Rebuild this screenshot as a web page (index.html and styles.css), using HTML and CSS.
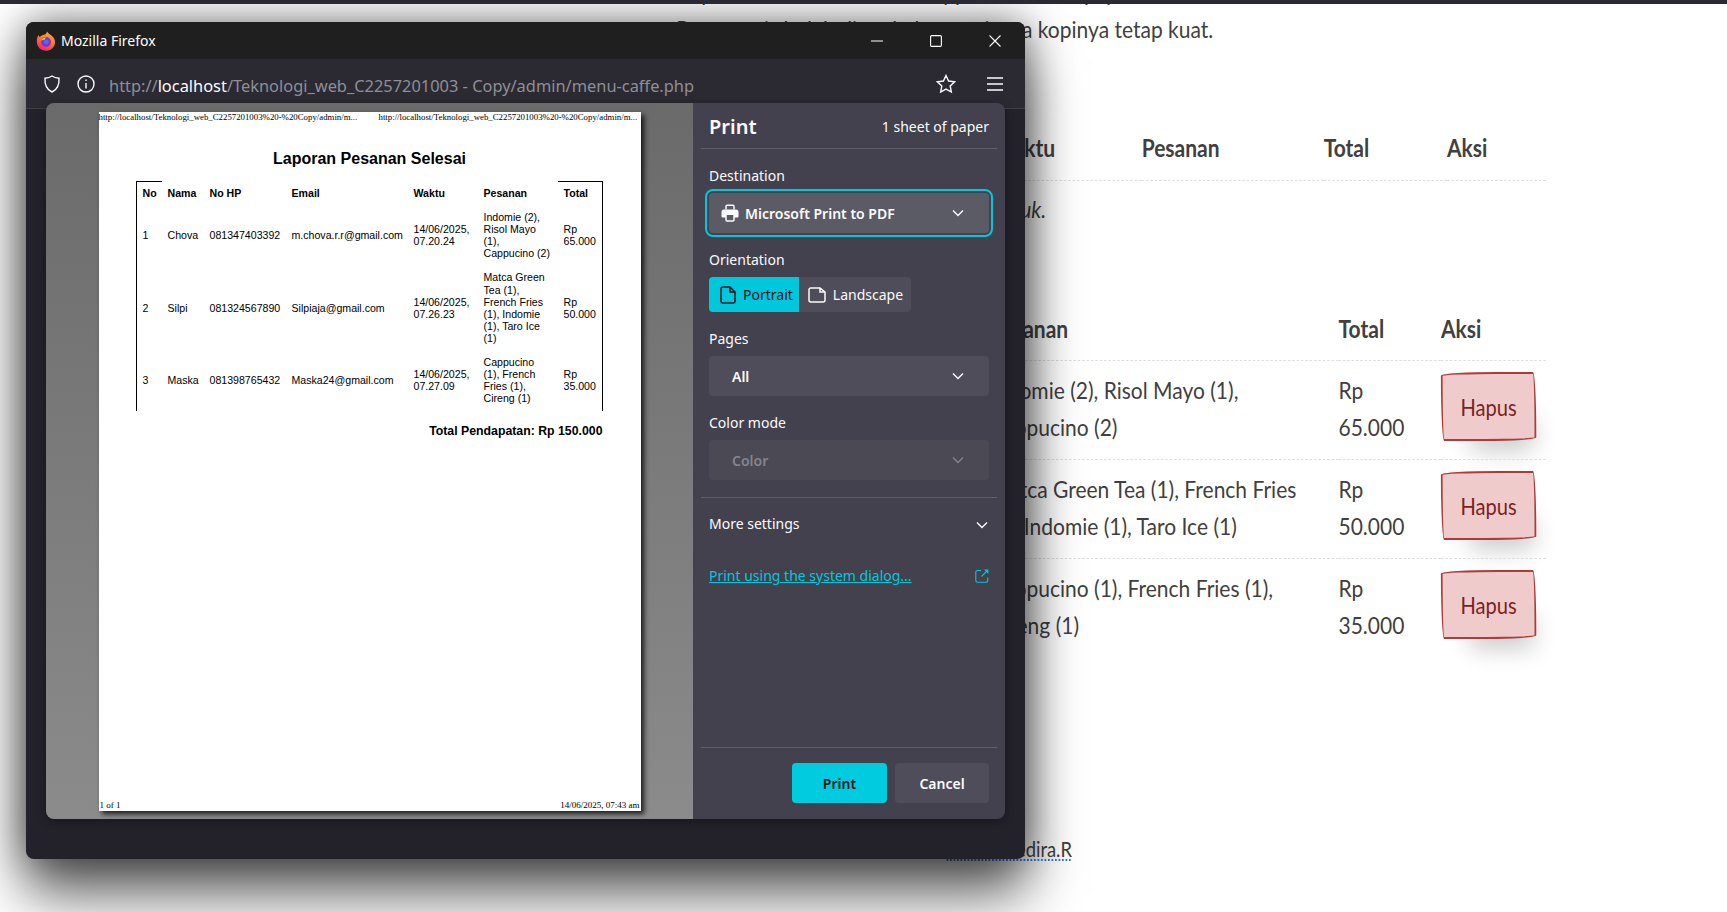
FILE: index.html
```html
<!DOCTYPE html>
<html lang="en">
  <head>
    <meta charset="UTF-8" />
    <meta name="viewport" content="width=device-width, initial-scale=1.0" />
    <title>Laporan Pesanan</title>
    <link rel="stylesheet" href="styles.css">
  </head>
  <body>
    <div class="top-bar"></div>

    <!-- page behind the popup -->
    <main class="page">
      <p class="intro">
        Kopi susu kami dibuat dari cappucino dan kopi pilihan<br />
        Rasa manis boleh ditambah, tetapi rasa kopinya tetap kuat.
      </p>

      <table class="orders orders-empty">
        <thead>
          <tr>
            <th class="c-name">Nama</th>
            <th class="c-time">Waktu</th>
            <th class="c-order">Pesanan</th>
            <th class="c-total">Total</th>
            <th class="c-action">Aksi</th>
          </tr>
        </thead>
        <tbody>
          <tr>
            <td colspan="5" class="empty-note">Belum ada pesanan masuk.</td>
          </tr>
        </tbody>
      </table>

      <table class="orders orders-done">
        <thead>
          <tr>
            <th class="c-name">Nama</th>
            <th class="c-order">Pesanan</th>
            <th class="c-total">Total</th>
            <th class="c-action">Aksi</th>
          </tr>
        </thead>
        <tbody>
          <tr>
            <td>Chova</td>
            <td>Indomie (2), Risol Mayo (1),<br />Cappucino (2)</td>
            <td>Rp<br />65.000</td>
            <td><button class="btn-delete">Hapus</button></td>
          </tr>
          <tr>
            <td>Silpi</td>
            <td>Matca Green Tea (1), French Fries<br />(1), Indomie (1), Taro Ice (1)</td>
            <td>Rp<br />50.000</td>
            <td><button class="btn-delete">Hapus</button></td>
          </tr>
          <tr>
            <td>Maska</td>
            <td>Cappucino (1), French Fries (1),<br />Cireng (1)</td>
            <td>Rp<br />35.000</td>
            <td><button class="btn-delete">Hapus</button></td>
          </tr>
        </tbody>
      </table>

      <footer class="page-footer"><span class="credit">Chova Nedira.R</span></footer>
    </main>

    <!-- firefox popup window -->
    <section class="window">
      <header class="title-bar">
        <svg class="ff-logo" viewBox="0 0 20 20" width="20" height="20">
          <defs>
            <linearGradient id="ffBody" x1="0.7" y1="0" x2="0.3" y2="1">
              <stop offset="0" stop-color="#ffb01f" />
              <stop offset="0.55" stop-color="#ff6a2b" />
              <stop offset="1" stop-color="#f0216d" />
            </linearGradient>
          </defs>
          <path d="M11 0.5 C12 3 15 3.5 17 6 C19 8.5 19.3 10.5 19 12.5 C18.2 17 14.5 19.8 10 19.8 C4.8 19.8 0.8 15.8 0.8 10.5 C0.8 8 1.3 5.8 2.5 4 C2.8 5 3.2 5.6 3.8 6 C5 4 7.5 3.8 9 3.4 C10 3 10.8 2 11 0.5 Z" fill="url(#ffBody)" />
          <circle cx="10" cy="11" r="5" fill="#7a35d6" />
          <circle cx="10.3" cy="10.8" r="2.4" fill="#4a6ef0" />
          <path d="M5.2 9.8 C6 7.6 8.2 6.4 10.4 6.6 C9.4 7.2 9 8 9 8.8 C7.6 8.8 6.2 9 5.2 9.8 Z" fill="#ffb52e" />
        </svg>
        <span class="title-text">Mozilla Firefox</span>
        <div class="win-controls">
          <svg viewBox="0 0 12 12" width="12" height="12"><path d="M0 6H12" /></svg>
          <svg viewBox="0 0 12 12" width="12" height="12"><rect x="0.6" y="0.6" width="10.8" height="10.8" rx="1.2" /></svg>
          <svg viewBox="0 0 12 12" width="12" height="12"><path d="M0.5 0.5L11.5 11.5M11.5 0.5L0.5 11.5" /></svg>
        </div>
      </header>

      <div class="url-bar">
        <svg class="url-icon" viewBox="0 0 18 18" width="18" height="18">
          <path d="M9 1 C11.2 2.6 13.5 3 16 3.2 C16.4 9.5 14.5 14.5 9 17 C3.5 14.5 1.6 9.5 2 3.2 C4.5 3 6.8 2.6 9 1 Z" />
        </svg>
        <svg class="url-icon info" viewBox="0 0 18 18" width="18" height="18">
          <circle cx="9" cy="9" r="8" />
          <path d="M9 8V13.5M9 4.5V6" />
        </svg>
        <div class="url-text">http://<b>localhost</b>/Teknologi_web_C2257201003 - Copy/admin/menu-caffe.php</div>
        <svg class="url-icon star" viewBox="0 0 20 20" width="20" height="20">
          <path d="M10 1.5 L12.6 7 L18.6 7.8 L14.2 12 L15.3 18 L10 15.1 L4.7 18 L5.8 12 L1.4 7.8 L7.4 7 Z" />
        </svg>
        <svg class="url-icon" viewBox="0 0 16 14" width="16" height="14">
          <path d="M0 1H16M0 7H16M0 13H16" />
        </svg>
      </div>

      <div class="print-dialog">
        <div class="preview">
          <div class="paper">
            <div class="paper-head">
              <span>http://localhost/Teknologi_web_C2257201003%20-%20Copy/admin/m...</span>
              <span>http://localhost/Teknologi_web_C2257201003%20-%20Copy/admin/m...</span>
            </div>
            <h1 class="report-title">Laporan Pesanan Selesai</h1>
            <table class="report">
              <colgroup>
                <col class="r-no" /><col class="r-name" /><col class="r-phone" /><col class="r-mail" />
                <col class="r-time" /><col class="r-order" /><col class="r-total" />
              </colgroup>
              <thead>
                <tr>
                  <th>No</th><th>Nama</th><th>No HP</th><th>Email</th><th>Waktu</th><th>Pesanan</th><th>Total</th>
                </tr>
              </thead>
              <tbody>
                <tr>
                  <td>1</td><td>Chova</td><td>081347403392</td><td>m.chova.r.r@gmail.com</td>
                  <td>14/06/2025,<br />07.20.24</td>
                  <td>Indomie (2),<br />Risol Mayo<br />(1),<br />Cappucino (2)</td>
                  <td>Rp<br />65.000</td>
                </tr>
                <tr>
                  <td>2</td><td>Silpi</td><td>081324567890</td><td>Silpiaja@gmail.com</td>
                  <td>14/06/2025,<br />07.26.23</td>
                  <td>Matca Green<br />Tea (1),<br />French Fries<br />(1), Indomie<br />(1), Taro Ice<br />(1)</td>
                  <td>Rp<br />50.000</td>
                </tr>
                <tr>
                  <td>3</td><td>Maska</td><td>081398765432</td><td>Maska24@gmail.com</td>
                  <td>14/06/2025,<br />07.27.09</td>
                  <td>Cappucino<br />(1), French<br />Fries (1),<br />Cireng (1)</td>
                  <td>Rp<br />35.000</td>
                </tr>
              </tbody>
            </table>
            <div class="report-sum">Total Pendapatan: Rp 150.000</div>
            <div class="paper-foot">
              <span>1 of 1</span>
              <span>14/06/2025, 07:43 am</span>
            </div>
          </div>
        </div>

        <aside class="settings">
          <div class="settings-head">
            <h2>Print</h2>
            <span>1 sheet of paper</span>
          </div>

          <div class="settings-body">
            <div class="field">
              <label>Destination</label>
              <div class="select select-focus">
                <svg class="printer" viewBox="0 0 18 18" width="18" height="18">
                  <path d="M5 5.5 V2.5 Q5 1.2 6.3 1.2 H11.7 Q13 1.2 13 2.5 V5.5" fill="none" stroke="#fbfbfe" stroke-width="1.5" />
                  <path d="M3 5.5 H15 Q17.5 5.5 17.5 8 V12.5 Q17.5 13.5 16.5 13.5 H1.5 Q0.5 13.5 0.5 12.5 V8 Q0.5 5.5 3 5.5 Z" fill="#fbfbfe" />
                  <rect x="5" y="10.2" width="8" height="6.8" rx="1" fill="#5b5b66" stroke="#fbfbfe" stroke-width="1.5" />
                </svg>
                <span class="select-text">Microsoft Print to PDF</span>
                <svg class="chevron" viewBox="0 0 12 8" width="12" height="8"><path d="M1 1.5L6 6.5L11 1.5" /></svg>
              </div>
            </div>

            <div class="field">
              <label>Orientation</label>
              <div class="toggle">
                <div class="toggle-btn active">
                  <svg viewBox="0 0 16 18" width="16" height="18"><path d="M3 1 H10 L15 6 V15 Q15 17 13 17 H3 Q1 17 1 15 V3 Q1 1 3 1 Z M10 1 V6 H15" /></svg>
                  Portrait
                </div>
                <div class="toggle-btn">
                  <svg viewBox="0 0 18 16" width="18" height="16"><path d="M3 1 H12 L17 5 V13 Q17 15 15 15 H3 Q1 15 1 13 V3 Q1 1 3 1 Z M12 1 V5 H17" /></svg>
                  Landscape
                </div>
              </div>
            </div>

            <div class="field">
              <label>Pages</label>
              <div class="select select-plain">
                <span class="select-text">All</span>
                <svg class="chevron" viewBox="0 0 12 8" width="12" height="8"><path d="M1 1.5L6 6.5L11 1.5" /></svg>
              </div>
            </div>

            <div class="field">
              <label>Color mode</label>
              <div class="select select-plain select-disabled">
                <span class="select-text">Color</span>
                <svg class="chevron" viewBox="0 0 12 8" width="12" height="8"><path d="M1 1.5L6 6.5L11 1.5" /></svg>
              </div>
            </div>

            <div class="more-settings">
              <span>More settings</span>
              <svg class="chevron" viewBox="0 0 12 8" width="12" height="8"><path d="M1 1.5L6 6.5L11 1.5" /></svg>
            </div>

            <div class="system-dialog">
              <a href="#">Print using the system dialog...</a>
              <svg viewBox="0 0 14 14" width="14" height="14">
                <path d="M6 1.5 H2.5 Q0.8 1.5 0.8 3.2 V11.5 Q0.8 13.2 2.5 13.2 H11 Q12.8 13.2 12.8 11.5 V8.5" />
                <path d="M6.5 7.5 L12.5 1.5" />
                <path d="M9 0.6 H13.4 V5 Z" class="fill" />
              </svg>
            </div>
          </div>

          <div class="settings-foot">
            <button class="btn btn-print">Print</button>
            <button class="btn btn-cancel">Cancel</button>
          </div>
        </aside>
      </div>
    </section>
  </body>
</html>
```

FILE: styles.css
```css
* {
  box-sizing: border-box;
}
html,
body {
  height: 100%;
}
body {
  margin: 0;
  background-color: #fff;
  overflow: hidden;
  font-family: "Noto Sans", Arial, sans-serif;
}

/* background page, squeezed because no narrow hand font is installed */
.top-bar {
  height: 4px;
  background-color: #2b2a33;
  position: relative;
  z-index: 1;
}
.page {
  margin-left: 600px;
  width: 1081px;
  transform: scaleX(0.875);
  transform-origin: left top;
  font-family: Lato, "Liberation Sans", sans-serif;
  font-size: 24px;
  line-height: 37px;
  color: #41403e;
}
.intro {
  margin: -31px 0 0 0;
  padding-left: 87px;
  white-space: nowrap;
}
.orders {
  width: 100%;
  border-collapse: collapse;
  table-layout: fixed;
}
.orders th {
  text-align: left;
  padding: 12px 0;
  line-height: 38px;
  font-weight: bold;
  border-bottom: 1px dashed #ddd;
}
.orders-empty {
  margin-top: 71px;
}
.orders-empty th {
  padding: 11px 0 13px;
}
.orders-empty .c-name {
  width: 449px;
}
.orders-empty .c-time {
  width: 170px;
}
.orders-empty .c-order {
  width: 208px;
}
.orders-empty .c-total {
  width: 141px;
}
.orders-done .c-name {
  width: 446px;
}
.orders-done .c-total {
  width: 117px;
}
.orders-done .c-action {
  width: 120px;
}
.empty-note {
  font-style: italic;
  text-align: right;
  padding: 9px 571px 13px 0;
}
.orders-done {
  margin-top: 58px;
}
.orders-done td {
  padding: 10px 0 14px;
  vertical-align: top;
  white-space: nowrap;
  border-bottom: 1px dashed #ddd;
}
.orders-done tr:last-child td {
  border-bottom: none;
}
.orders-done td:last-child {
  padding-top: 11px;
  padding-bottom: 0;
}
.btn-delete {
  width: 109px;
  height: 69px;
  padding: 0;
  display: block;
  font-family: inherit;
  font-size: 23px;
  color: #7d1f1f;
  background-color: #f0cbcb;
  border: 2px solid #b03a3a;
  border-radius: 255px 15px 225px 15px / 15px 225px 15px 255px;
  box-shadow: 15px 28px 25px -18px rgba(0, 0, 0, 0.2);
}
.page-footer {
  margin-top: 180px;
  padding-left: 396px;
  font-size: 21px;
  line-height: 24px;
}
.credit {
  text-decoration: underline dotted #3c78d8;
}

/* firefox window */
.window {
  position: absolute;
  left: 26px;
  top: 22px;
  width: 999px;
  height: 837px;
  border-radius: 8px;
  background-color: #23222b;
  box-shadow: 0 36px 56px rgba(0, 0, 0, 0.6), 0 0 40px rgba(0, 0, 0, 0.5);
  overflow: hidden;
}
.title-bar {
  height: 37px;
  background-color: #1f1f20;
  display: flex;
  align-items: center;
  padding-left: 10px;
  color: #fff;
}
.ff-logo {
  margin-right: 5px;
}
.title-text {
  font-size: 14px;
}
.win-controls {
  margin-left: auto;
  margin-right: 24px;
  display: flex;
  gap: 47px;
}
.win-controls svg {
  fill: none;
  stroke: #fff;
  stroke-width: 1.1;
}
.url-bar {
  height: 50px;
  background-color: #2b2a33;
  border-bottom: 1px solid #3f3f45;
  display: flex;
  align-items: center;
  padding-left: 17px;
  padding-right: 22px;
}
.url-icon {
  fill: none;
  stroke: #fbfbfe;
  stroke-width: 1.4;
  flex-shrink: 0;
  margin-right: 16px;
}
.url-icon:last-child {
  margin-right: 0;
}
.url-icon.info {
  margin-right: 14px;
}
.url-text {
  flex: 1;
  padding-top: 4px;
  font-size: 16.4px;
  color: #8f8f96;
  white-space: nowrap;
}
.url-text b {
  color: #fbfbfe;
  font-weight: normal;
}
.url-icon.star {
  margin-right: 31px;
}

/* print dialog */
.print-dialog {
  position: absolute;
  left: 20px;
  top: 81px;
  width: 959px;
  height: 716px;
  display: flex;
  border-radius: 8px;
  overflow: hidden;
  box-shadow: 0 2px 8px rgba(0, 0, 0, 0.35);
}
.preview {
  width: 647px;
  padding: 9px 0 8px;
  display: flex;
  justify-content: center;
  background: linear-gradient(#6a6a6a, #8b8b8b);
}
.paper {
  width: 542px;
  background-color: #fff;
  box-shadow: 3px 3px 5px rgba(0, 0, 0, 0.8);
  display: flex;
  flex-direction: column;
  color: #000;
}
.paper-head {
  display: flex;
  justify-content: space-between;
  font-family: "Liberation Serif", serif;
  font-size: 8.8px;
  line-height: 10px;
  white-space: nowrap;
}
.paper-head span {
  width: 262px;
}
.report-title {
  margin: 28px 0 13px;
  text-align: center;
  font-family: "Liberation Sans", Arial, sans-serif;
  font-size: 16px;
  line-height: 18px;
  font-weight: bold;
}
.report {
  margin-left: 37px;
  width: 467px;
  border-collapse: separate;
  border-spacing: 0;
  table-layout: fixed;
  font-family: "Liberation Sans", Arial, sans-serif;
  font-size: 10.6px;
  line-height: 12.1px;
  border-left: 1px solid #000;
  border-right: 1px solid #000;
}
.r-no {
  width: 25px;
}
.r-name {
  width: 42px;
}
.r-phone {
  width: 82px;
}
.r-mail {
  width: 122px;
}
.r-time {
  width: 70px;
}
.r-order {
  width: 80px;
}
.report th,
.report td {
  padding: 6px 0 6px 6px;
  text-align: left;
  white-space: nowrap;
}
.report th {
  padding-top: 5px;
  font-weight: bold;
  border-top: 1px solid transparent;
}
.report tr:last-child td {
  padding-bottom: 7px;
}
.report th:first-child,
.report th:last-child {
  border-top-color: #000;
}
.report-sum {
  margin: 12px 38px 0 0;
  text-align: right;
  font-family: "Liberation Sans", Arial, sans-serif;
  font-size: 12.3px;
  line-height: 16px;
  font-weight: bold;
}
.paper-foot {
  margin-top: auto;
  display: flex;
  justify-content: space-between;
  padding: 0 1px;
  font-family: "Liberation Serif", serif;
  font-size: 9px;
  line-height: 11px;
}

/* settings column */
.settings {
  width: 312px;
  background-color: #42414d;
  color: #fbfbfe;
  display: flex;
  flex-direction: column;
  font-size: 14px;
}
.settings-head {
  height: 46px;
  margin: 0 8px;
  padding: 2px 8px 0;
  border-bottom: 1px solid #5f5e69;
  display: flex;
  align-items: center;
  justify-content: space-between;
}
.settings-head h2 {
  margin: 0;
  font-size: 20px;
  font-weight: 600;
}
.settings-body {
  flex: 1;
  padding-top: 17px;
}
.field {
  margin: 0 16px 17px;
}
.field label {
  display: block;
  height: 20px;
  line-height: 20px;
  margin-bottom: 7px;
}
.select {
  height: 40px;
  border-radius: 4px;
  display: flex;
  align-items: center;
  padding-right: 25px;
  font-weight: 600;
}
.select-focus {
  background-color: #5b5b66;
  padding-left: 12px;
  outline: 2px solid #00c8dc;
  outline-offset: 2px;
}
.select-plain {
  background-color: #4e4d59;
  padding-left: 23px;
}
.select-disabled {
  background-color: #4a4954;
  color: #85848d;
}
.select-disabled .chevron {
  stroke: #85848d;
}
.printer {
  margin-right: 6px;
}
.select-text {
  flex: 1;
}
.chevron {
  fill: none;
  stroke: #fbfbfe;
  stroke-width: 1.4;
}
.toggle {
  display: inline-flex;
  height: 35px;
  border-radius: 4px;
  background-color: #4e4d59;
  overflow: hidden;
}
.toggle-btn {
  display: flex;
  align-items: center;
  gap: 7px;
  padding: 0 6px 0 11px;
}
.toggle-btn svg {
  fill: none;
  stroke: currentColor;
  stroke-width: 1.5;
}
.toggle-btn.active {
  background-color: #00c8dc;
  color: #15141a;
}
.toggle-btn + .toggle-btn {
  padding-left: 9px;
  padding-right: 8px;
}
.more-settings {
  border-top: 1px solid #5f5e69;
  margin: 0 8px;
  padding: 16px 9px 0 8px;
  height: 62px;
  line-height: 20px;
  display: flex;
  align-items: flex-start;
  justify-content: space-between;
}
.more-settings .chevron {
  margin-top: 7px;
}
.system-dialog {
  margin: 7px 16px 0;
  display: flex;
  align-items: center;
  justify-content: space-between;
  line-height: 20px;
}
.system-dialog a {
  color: #00c8dc;
}
.system-dialog svg {
  fill: none;
  stroke: #00c8dc;
  stroke-width: 1.1;
}
.system-dialog .fill {
  fill: #00c8dc;
  stroke: none;
}
.settings-foot {
  margin: 0 8px;
  padding: 15px 8px 16px;
  border-top: 1px solid #5f5e69;
  display: flex;
  justify-content: flex-end;
  gap: 8px;
}
.btn {
  height: 40px;
  border: none;
  border-radius: 4px;
  font-family: inherit;
  font-size: 14px;
  font-weight: 600;
}
.btn-print {
  width: 95px;
  background-color: #00cbdf;
  color: #15141a;
}
.btn-cancel {
  width: 94px;
  background-color: #4e4d59;
  color: #fbfbfe;
}
```
